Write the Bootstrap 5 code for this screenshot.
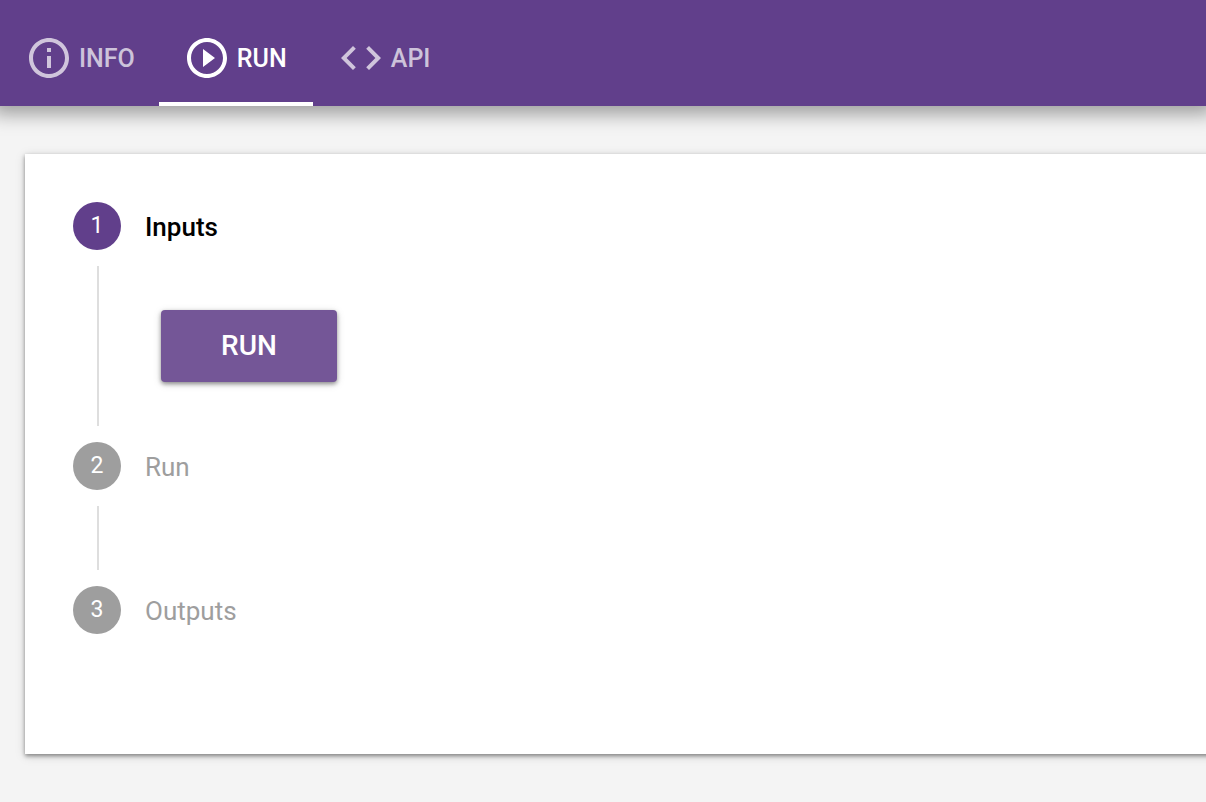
<!DOCTYPE html>
<html lang="en">
<head>
<meta charset="utf-8">
<meta name="viewport" content="width=device-width, initial-scale=1">
<title>Run</title>
<link rel="stylesheet" href="https://cdn.jsdelivr.net/npm/bootstrap@5.3.0/dist/css/bootstrap.min.css">
<style>
  body { background: #f4f4f4; font-family: Roboto, sans-serif; font-size: 26px; line-height: 32px; overflow-x: hidden; }
  .topbar { background: #613f8b; height: 106px; box-shadow: 0 0 18px 8px rgba(0,0,0,.36); padding-left: 1px; }
  .topbar .nav-link { height: 106px; min-width: 154px; padding: 14px 24px 0; gap: 6px; font-size: 25px; font-weight: 500; color: rgba(255,255,255,.7); border-bottom: 4px solid transparent; }
  .topbar .nav-link.active { color: #fff; border-bottom-color: #fff; }
  .topbar svg { width: 48px; height: 48px; fill: currentColor; }
  .topbar span { padding-top: 2px; }
  .panel { background: #fff; margin: 48px -12px 48px 25px; padding: 48px 48px 120px; box-shadow: 0 2px 4px rgba(0,0,0,.4), 0 2px 10px rgba(0,0,0,.15); }
  .step-head { gap: 24px; color: #9e9e9e; }
  .step-head.current { color: #000; }
  .step-num { width: 48px; height: 48px; background: #9e9e9e; color: #fff; font-size: 23px; }
  .current .step-num { background: #613f8b; }
  .step-title { font-size: 26px; line-height: 32px; font-weight: 400; margin: 2px 0 0; }
  .current .step-title { font-weight: 500; }
  .step-body { border-left: 2px solid #dedede; margin: 16px 0 16px 24px; min-height: 64px; padding-left: 62px; }
  .step-body.open { padding-top: 44px; padding-bottom: 44px; }
  .btn-run { background: #745697; color: #fff; width: 176px; height: 72px; border: 0; border-radius: 4px; font: 500 28px/32px Roboto, sans-serif; box-shadow: 0 2px 4px rgba(0,0,0,.4), 0 2px 10px rgba(0,0,0,.12); }
  .btn-run:hover { background: #613f8b; color: #fff; }
</style>
</head>
<body>
<header class="topbar">
  <nav class="nav flex-nowrap">
    <a class="nav-link d-flex align-items-center" href="#info">
      <svg viewBox="0 0 24 24" aria-hidden="true"><path d="M11 17h2v-6h-2v6zm1-15C6.480 2 2 6.480 2 12s4.480 10 10 10 10-4.480 10-10S17.520 2 12 2zm0 18c-4.410 0-8-3.590-8-8s3.590-8 8-8 8 3.590 8 8-3.590 8-8 8zM11 9h2V7h-2v2z"/></svg>
      <span>INFO</span>
    </a>
    <a class="nav-link d-flex align-items-center active" href="#run" aria-current="page">
      <svg viewBox="0 0 24 24" aria-hidden="true"><path d="M10 16.500l6-4.500-6-4.500v9zM12 2C6.480 2 2 6.480 2 12s4.480 10 10 10 10-4.480 10-10S17.520 2 12 2zm0 18c-4.410 0-8-3.590-8-8s3.590-8 8-8 8 3.590 8 8-3.590 8-8 8z"/></svg>
      <span>RUN</span>
    </a>
    <a class="nav-link d-flex align-items-center" href="#api">
      <svg viewBox="0 0 24 24" aria-hidden="true"><path d="M9.400 16.600L4.800 12l4.600-4.600L8 6l-6 6 6 6 1.400-1.400zm5.200 0l4.600-4.600-4.600-4.600L16 6l6 6-6 6-1.400-1.400z"/></svg>
      <span>API</span>
    </a>
  </nav>
</header>
<main class="panel">
  <section>
    <div class="step-head current d-flex align-items-center">
      <span class="step-num rounded-circle d-flex align-items-center justify-content-center">1</span>
      <h2 class="step-title">Inputs</h2>
    </div>
    <div class="step-body open"><button type="button" class="btn btn-run d-block">RUN</button></div>
  </section>
  <section>
    <div class="step-head d-flex align-items-center">
      <span class="step-num rounded-circle d-flex align-items-center justify-content-center">2</span>
      <h2 class="step-title">Run</h2>
    </div>
    <div class="step-body"></div>
  </section>
  <section>
    <div class="step-head d-flex align-items-center">
      <span class="step-num rounded-circle d-flex align-items-center justify-content-center">3</span>
      <h2 class="step-title">Outputs</h2>
    </div>
  </section>
</main>
<script src="https://cdn.jsdelivr.net/npm/bootstrap@5.3.0/dist/js/bootstrap.bundle.min.js"></script>
</body>
</html>
